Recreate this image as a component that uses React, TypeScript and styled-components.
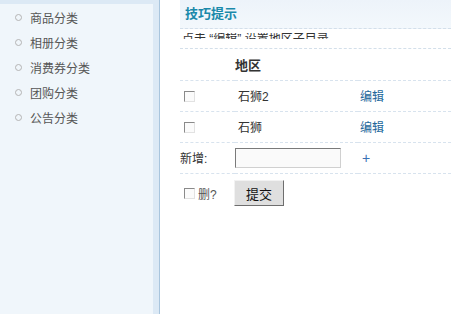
import styled, { createGlobalStyle } from 'styled-components';

const GlobalStyle = createGlobalStyle`
  html, body {
    margin: 0;
    padding: 0;
    background: #fff;
    font-family: "Liberation Sans", "Noto Sans CJK SC", sans-serif;
    font-size: 12px;
    color: #333;
  }
`;

const categories = ['商品分类', '相册分类', '消费券分类', '团购分类', '公告分类'];
const regions = ['石狮2', '石狮'];

function Sidebar({ className, items }: { className?: string; items: string[] }) {
  return (
    <div className={className}>
      <SidePanel>
        <NavList>
          {items.map(item => (
            <NavItem key={item}>{item}</NavItem>
          ))}
        </NavList>
      </SidePanel>
    </div>
  );
}

const StyledSidebar = styled(Sidebar)`
  width: 160px;
  height: 314px;
  flex: none;
  background: #dce9f5;
  border-right: 1px solid #a9c5dd;
  padding-top: 4px;
  box-sizing: border-box;
  display: flex;
`;

const SidePanel = styled.div`
  width: 153px;
  background: #f0f6fb;
`;

const NavList = styled.ul`
  list-style: none;
  margin: 0;
  padding: 1px 0 0 0;
`;

const NavItem = styled.li`
  display: flex;
  align-items: center;
  height: 25px;
  padding-left: 15px;
  color: #555;
  font-size: 12px;

  &::before {
    content: '';
    width: 5px;
    height: 5px;
    border: 1px solid #b4b4b4;
    border-radius: 50%;
    margin-right: 8px;
  }
`;

const Main = styled.div`
  flex: 1;
  padding-left: 20px;
  min-width: 0;
`;

const TipTitle = styled.div`
  height: 28px;
  line-height: 28px;
  padding-left: 5px;
  background: linear-gradient(#edf3fa, #f3f8fc);
  border-bottom: 1px dashed #d3dfea;
  color: #1a89aa;
  font-weight: bold;
  font-size: 13px;
`;

const TipBody = styled.div`
  padding: 4px 0 9px 2px;
  border-bottom: 1px dashed #d3dfea;
`;

const TipText = styled.div`
  height: 6px;
  line-height: 12px;
  overflow: hidden;
  color: #333;
  white-space: nowrap;
`;

const Table = styled.table`
  width: 100%;
  border-collapse: collapse;
`;

const Row = styled.tr<{ $last?: boolean }>`
  height: ${p => (p.$last ? 40 : 31)}px;
  border-bottom: ${p => (p.$last ? 'none' : '1px dashed #d8e3ee')};
`;

const Cell = styled.td<{ $w?: number; $pad?: number; $head?: boolean }>`
  width: ${p => (p.$w ? `${p.$w}px` : 'auto')};
  padding: 0 0 0 ${p => p.$pad ?? 0}px;
  font-weight: ${p => (p.$head ? 'bold' : 'normal')};
  font-size: ${p => (p.$head ? 13 : 12)}px;
  color: #333;
  vertical-align: middle;
  white-space: nowrap;
`;

const Check = styled.input.attrs({ type: 'checkbox' })`
  appearance: none;
  width: 11px;
  height: 11px;
  margin: 0 3px 0 4px;
  border: 1px solid;
  border-color: #8a8a8a #e2e2e2 #e2e2e2 #8a8a8a;
  background: #fbfbfb;
  vertical-align: middle;
  box-sizing: border-box;
`;

const EditLink = styled.a`
  color: #23679a;
  text-decoration: none;
`;

const AddLink = styled.a`
  color: #3a70b3;
  font-size: 14px;
  text-decoration: none;
  margin-left: 2px;
`;

const TextInput = styled.input`
  width: 106px;
  height: 20px;
  box-sizing: border-box;
  border: 1px solid;
  border-color: #7a7a7a #d0d0d0 #d0d0d0 #7a7a7a;
  background: #fafafa;
  padding: 0 2px;
  margin: 0;
  vertical-align: middle;
`;

const DeleteLabel = styled.label`
  display: inline-flex;
  align-items: center;
  color: #555;
`;

const SubmitButton = styled.button`
  width: 50px;
  height: 26px;
  background: #dfdfdf;
  border: 1px solid;
  border-color: #f2f2f2 #6e6e6e #6e6e6e #f2f2f2;
  font-family: "Liberation Sans", "Noto Sans CJK SC", sans-serif;
  font-size: 13px;
  color: #111;
  padding: 0;
  margin-left: -1px;
`;

const Page = styled.div`
  display: flex;
  width: 451px;
  height: 314px;
  overflow: hidden;
`;

export default function App() {
  return (
    <>
      <GlobalStyle />
      <Page>
        <StyledSidebar items={categories} />
        <Main>
          <TipTitle>技巧提示</TipTitle>
          <TipBody>
            <TipText>点击 “编辑” 设置地区子目录</TipText>
          </TipBody>
          <Table>
            <tbody>
              <Row>
                <Cell $w={55} />
                <Cell $w={120} $head>地区</Cell>
                <Cell />
              </Row>
              {regions.map(region => (
                <Row key={region}>
                  <Cell $w={55}><Check /></Cell>
                  <Cell $w={120} $pad={3}>{region}</Cell>
                  <Cell $pad={2}><EditLink href="#">编辑</EditLink></Cell>
                </Row>
              ))}
              <Row>
                <Cell $w={55}>新增:</Cell>
                <Cell $w={120}><TextInput /></Cell>
                <Cell $pad={2}><AddLink href="#">+</AddLink></Cell>
              </Row>
              <Row $last>
                <Cell $w={55}>
                  <DeleteLabel><Check />删?</DeleteLabel>
                </Cell>
                <Cell $w={120}><SubmitButton>提交</SubmitButton></Cell>
                <Cell />
              </Row>
            </tbody>
          </Table>
        </Main>
      </Page>
    </>
  );
}
